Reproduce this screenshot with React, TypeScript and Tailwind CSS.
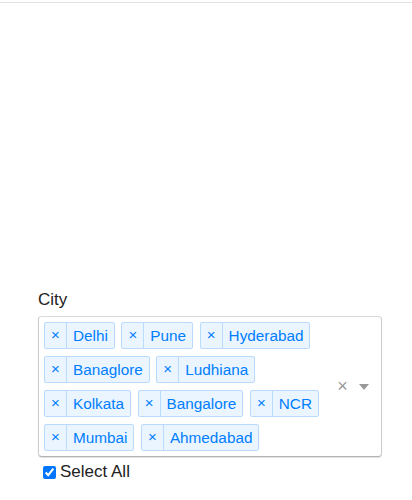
import { useState } from "react";

const cities = [
    "Delhi",
    "Pune",
    "Hyderabad",
    "Banaglore",
    "Ludhiana",
    "Kolkata",
    "Bangalore",
    "NCR",
    "Mumbai",
    "Ahmedabad",
];

export default function App() {
    const [selected, setSelected] = useState<string[]>(cities);
    const [selectAll, setSelectAll] = useState(true);

    const remove = (city: string) => setSelected(selected.filter((c) => c !== city));

    return (
        <div className="min-h-screen bg-white text-[#333] text-[17px]" style={{ fontFamily: '"Liberation Sans", Arial, sans-serif' }}>
            <div className="h-[2px]" />
            <div className="h-px bg-[#e3e3e3]" />

            <div className="pt-[285px] pl-[38px]">
                <label className="block leading-6 mb-[4px] text-[#222]">City</label>

                <div className="w-[344px] flex rounded-[4px] border border-[#ccc] border-t-[#d9d9d9] border-b-[#b3b3b3] bg-white shadow-[0_1px_1px_rgba(0,0,0,0.12)]">
                    <div className="flex-1 flex flex-wrap content-start gap-x-[6.5px] gap-y-[7px] pl-[5px] pt-[5px] pb-[5px]">
                        {selected.map((city) => (
                            <div key={city} className="flex rounded-[2px] border border-[#b9dbff] bg-[#ebf5ff] text-[#007eff]">
                                <span
                                    onClick={() => remove(city)}
                                    className="w-[22px] flex items-center justify-center border-r border-[#b9dbff] text-[15px] leading-none pb-[2px] cursor-pointer"
                                >
                                    ×
                                </span>
                                <span className="px-[6px] py-[2px] text-[15.3px] leading-[21px]">{city}</span>
                            </div>
                        ))}
                    </div>
                    <div className="flex items-center">
                        <span
                            onClick={() => setSelected([])}
                            className="w-[17px] text-center text-[18px] leading-none text-[#999] cursor-pointer pb-[1px]"
                        >
                            ×
                        </span>
                        <span className="w-[25px] mr-[5px] flex justify-center">
                            <span className="block w-0 h-0 border-t-[6px] border-x-[5px] border-b-0 border-t-[#999] border-x-transparent" />
                        </span>
                    </div>
                </div>

                <label className="mt-[3px] flex items-center leading-6 text-[#222]">
                    <input
                        type="checkbox"
                        checked={selectAll}
                        onChange={(e) => setSelectAll(e.target.checked)}
                        className="w-[13px] h-[13px] ml-[5px] mr-[4px] accent-[#0075ff]"
                    />
                    Select All
                </label>
            </div>
        </div>
    );
}
